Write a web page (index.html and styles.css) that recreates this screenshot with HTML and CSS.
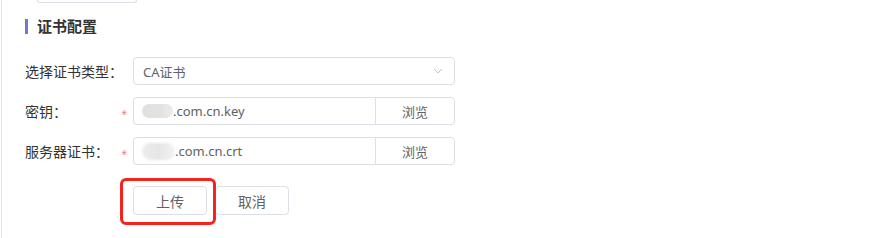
FILE: index.html
```html
<!DOCTYPE html>
<html lang="zh-CN">
<head>
<meta charset="utf-8">
<title>证书配置</title>
<link rel="stylesheet" href="styles.css">
</head>
<body>
<div class="page">
  <div class="top-stub"></div>
  <div class="section-title"><span class="bar"></span><span>证书配置</span></div>
  <div class="form">
    <div class="row">
      <label class="label">选择证书类型：</label>
      <span class="star"></span>
      <div class="select">
        <span class="value">CA证书</span>
        <svg class="chevron" width="10" height="6" viewBox="0 0 10 6"><path d="M1 1 L5 5 L9 1" fill="none" stroke="#c0c4cc" stroke-width="1"/></svg>
      </div>
    </div>
    <div class="row">
      <label class="label">密钥：</label>
      <span class="star">*</span>
      <div class="group">
        <div class="input"><span class="blob"></span><span class="value">.com.cn.key</span></div>
        <div class="browse">浏览</div>
      </div>
    </div>
    <div class="row">
      <label class="label">服务器证书：</label>
      <span class="star">*</span>
      <div class="group">
        <div class="input"><span class="blob blob2"></span><span class="value">.com.cn.crt</span></div>
        <div class="browse">浏览</div>
      </div>
    </div>
    <div class="actions">
      <span class="highlight"></span>
      <button class="btn">上传</button>
      <button class="btn">取消</button>
    </div>
  </div>
</div>
</body>
</html>
```
FILE: styles.css
```css
* { box-sizing: border-box; }
html, body { margin: 0; padding: 0; background: #fff; }
body {
  font-family: "Noto Sans", "Noto Sans CJK SC", sans-serif;
  color: #333;
  width: 877px;
  height: 238px;
  overflow: hidden;
}
.page {
  margin-left: 1px;
  border-left: 1px solid #e4e4e4;
  height: 238px;
}
.top-stub {
  margin-left: 35px;
  width: 100px;
  height: 3px;
  border: 1px solid #dcdfe6;
  border-top: none;
  border-radius: 0 0 5px 5px;
}
.section-title {
  margin-top: 15px;
  padding-left: 23px;
  display: flex;
  align-items: center;
  gap: 9px;
  height: 16px;
  font-size: 15px;
  font-weight: bold;
  color: #333;
  line-height: 16px;
}
.bar {
  width: 3px;
  height: 15px;
  background: #7279c8;
}
.form {
  padding-left: 23px;
  margin-top: 23px;
  display: flex;
  flex-direction: column;
  gap: 12px;
}
.row {
  display: flex;
  align-items: center;
  height: 28px;
}
.label {
  flex: 0 0 93px;
  width: 93px;
  white-space: nowrap;
  font-size: 14px;
  color: #333;
}
.star {
  flex: 0 0 15px;
  width: 15px;
  padding-right: 6px;
  text-align: right;
  color: #f47a8a;
  font-size: 10px;
  padding-top: 6px;
}
.select {
  flex: 0 0 322px;
  width: 322px;
  height: 28px;
  border: 1px solid #dcdfe6;
  border-radius: 4px;
  display: flex;
  align-items: center;
  justify-content: space-between;
  padding: 0 11px 0 9px;
}
.value {
  font-size: 13px;
  color: #606266;
  white-space: nowrap;
}
.group {
  flex: 0 0 322px;
  display: flex;
  width: 322px;
  height: 28px;
}
.input {
  width: 242px;
  height: 28px;
  border: 1px solid #dcdfe6;
  border-right: none;
  border-radius: 4px 0 0 4px;
  display: flex;
  align-items: center;
  padding-left: 8px;
}
.blob {
  width: 31px;
  height: 14px;
  border-radius: 7px;
  background: linear-gradient(90deg, #e0e0e0 0%, #e2e2e2 60%, #ececec 100%);
}
.blob2 {
  width: 33px;
  height: 17px;
  border-radius: 9px;
  background: linear-gradient(90deg, #ececec 0%, #e6e6e6 50%, #f2f2f2 100%);
  filter: blur(1px);
}
.browse {
  width: 80px;
  height: 28px;
  border: 1px solid #dcdfe6;
  border-radius: 0 4px 4px 0;
  display: flex;
  align-items: center;
  justify-content: center;
  font-size: 13px;
  color: #606266;
}
.actions {
  position: relative;
  margin-top: 9px;
  padding-left: 108px;
  display: flex;
  gap: 8px;
}
.btn {
  width: 74px;
  height: 29px;
  border: 1px solid #dcdfe6;
  border-radius: 4px;
  background: #fff;
  font-family: "Noto Sans", "Noto Sans CJK SC", sans-serif;
  font-size: 14px;
  color: #606266;
  padding: 0;
}
.highlight {
  position: absolute;
  left: 95px;
  top: -8px;
  width: 96px;
  height: 47px;
  border: 3px solid #f5231c;
  border-radius: 6px;
  pointer-events: none;
}
```
